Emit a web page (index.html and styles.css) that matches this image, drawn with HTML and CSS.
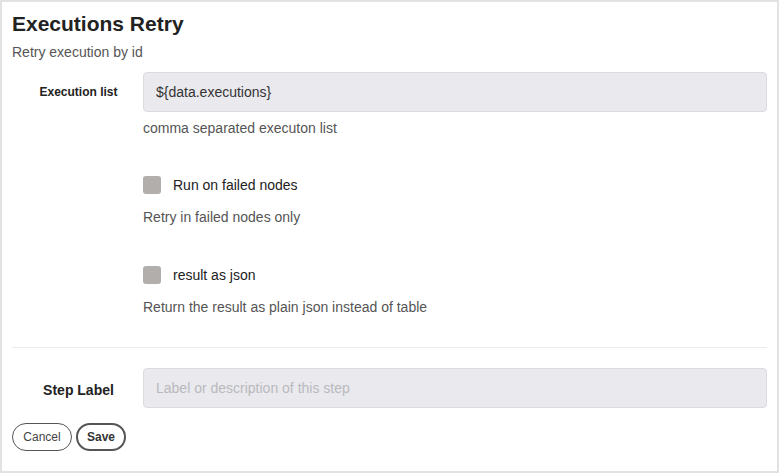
FILE: index.html
```html
<!DOCTYPE html>
<html>
<head>
<meta charset="utf-8">
<link rel="stylesheet" href="styles.css">
</head>
<body>
<div class="frame">
  <div class="header">
    <h1 class="title">Executions Retry</h1>
    <div class="subtitle">Retry execution by id</div>
  </div>
  <div class="form">
    <div class="row">
      <label class="label label-sm">Execution list</label>
      <div class="field">
        <div class="input">${data.executions}</div>
        <div class="help">comma separated executon list</div>
      </div>
    </div>
    <div class="row row-check">
      <div class="label"></div>
      <div class="field">
        <div class="check"><span class="box"></span><span class="check-text">Run on failed nodes</span></div>
        <div class="help">Retry in failed nodes only</div>
      </div>
    </div>
    <div class="row row-check">
      <div class="label"></div>
      <div class="field">
        <div class="check"><span class="box"></span><span class="check-text">result as json</span></div>
        <div class="help">Return the result as plain json instead of table</div>
      </div>
    </div>
  </div>
  <hr class="sep">
  <div class="row row-step">
    <label class="label label-lg">Step Label</label>
    <div class="field">
      <div class="input placeholder">Label or description of this step</div>
    </div>
  </div>
  <div class="actions">
    <button class="btn">Cancel</button>
    <button class="btn btn-save">Save</button>
  </div>
</div>
</body>
</html>
```

FILE: styles.css
```css
html, body {
  margin: 0;
  padding: 0;
  background: #e2e2e2;
}
body {
  font-family: "Liberation Sans", Arial, Helvetica, sans-serif;
  color: #222;
}
.frame {
  box-sizing: border-box;
  width: 775px;
  height: 469px;
  margin: 2px 2px 2px 2px;
  background: #fff;
  padding: 0 10px;
}
.header {
  padding-top: 9px;
}
.title {
  margin: 0;
  font-size: 21px;
  line-height: 26px;
  font-weight: bold;
  color: #222;
}
.subtitle {
  margin-top: 7px;
  font-size: 14px;
  line-height: 17px;
  color: #555;
}
.form {
  margin-top: 11px;
}
.row {
  display: grid;
  grid-template-columns: 131px 1fr;
  align-items: start;
}
.label {
  text-align: center;
  font-weight: bold;
  color: #222;
  padding-left: 2px;
}
.label-sm {
  font-size: 12px;
  line-height: 40px;
}
.label-lg {
  font-size: 14px;
  line-height: 40px;
  padding-top: 2px;
}
.input {
  box-sizing: border-box;
  height: 40px;
  background: #e9e9ee;
  border: 1px solid #dcdce0;
  border-radius: 4px;
  padding: 0 12px;
  font-size: 14px;
  line-height: 38px;
  color: #333;
}
.placeholder {
  color: #b9b9bd;
}
.help {
  margin-top: 8px;
  font-size: 14px;
  line-height: 17px;
  color: #555;
}
.row-check {
  margin-top: 39px;
}
.row-check + .row-check {
  margin-top: 40px;
}
.check {
  display: flex;
  align-items: center;
  gap: 12px;
  height: 18px;
}
.box {
  width: 18px;
  height: 18px;
  border-radius: 3px;
  background: #b1aeab;
}
.check-text {
  font-size: 14px;
  color: #222;
}
.row-check .help {
  margin-top: 15px;
}
.sep {
  margin: 31px 0 0;
  border: 0;
  border-top: 1px solid #ebebeb;
  height: 0;
}
.row-step {
  margin-top: 20px;
}
.actions {
  display: flex;
  gap: 4px;
  margin-top: 13px;
}
.btn {
  font-family: "Liberation Sans", Arial, Helvetica, sans-serif;
  box-sizing: border-box;
  height: 28px;
  width: 60px;
  padding: 0;
  border: 1px solid #555;
  border-radius: 14px;
  background: #fff;
  font-size: 12px;
  color: #444;
}
.btn-save {
  width: 50px;
  border: 2px solid #555;
  font-weight: bold;
  color: #333;
}
```
